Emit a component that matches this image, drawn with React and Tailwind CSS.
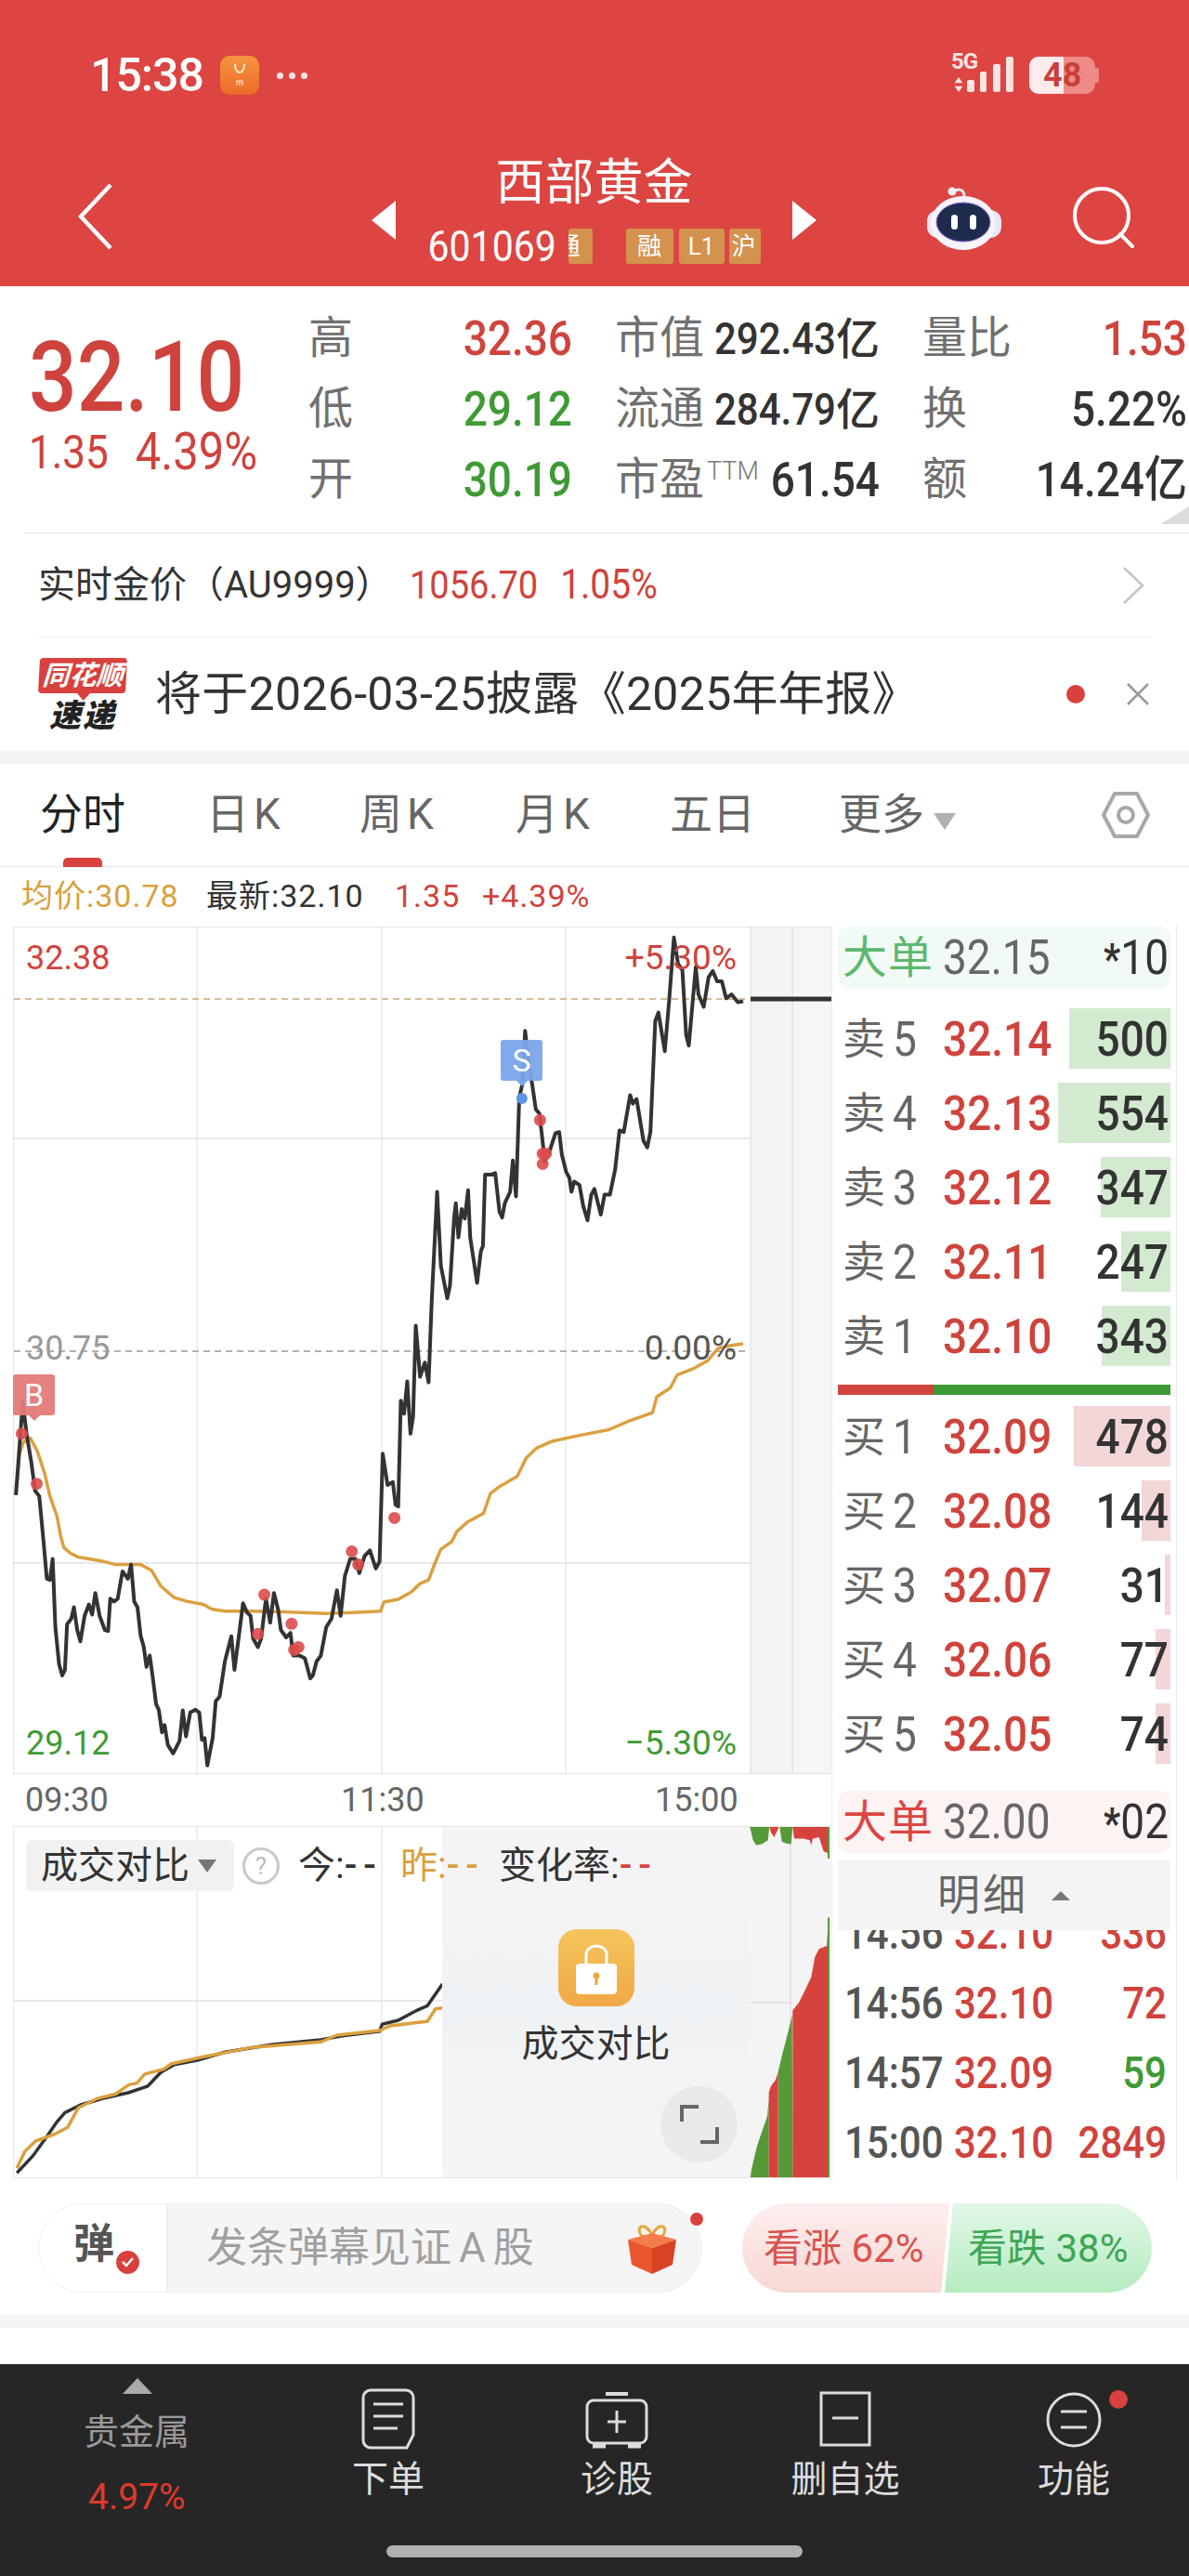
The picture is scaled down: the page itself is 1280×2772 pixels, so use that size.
const RED = "text-[#cf433d]";
const GREEN = "text-[#3f9a35]";
const tall = "inline-block scale-y-[1.14]";

// traced from the chart, in 1.742 / 1.633 zoom coordinates
const pricePts = "28,1058 35,970 41,895 48,950 57,1000 64,1050 72,1060 80,1140 86,1205 92,1207 97,1170 102,1290 109,1355 115,1375 120,1365 124,1285 132,1275 137,1255 143,1295 149,1315 157,1270 165,1250 171,1268 177,1230 185,1270 195,1295 201,1297 205,1240 212,1245 219,1240 228,1192 238,1205 244,1180 250,1245 256,1255 262,1305 268,1325 273,1360 279,1340 285,1380 291,1425 296,1435 302,1475 307,1462 313,1497 323,1512 335,1490 341,1436 347,1482 355,1440 365,1435 372,1440 377,1488 382,1485 387,1533 397,1485 403,1420 410,1412 420,1350 432,1306 438,1365 447,1300 454,1248 462,1265 468,1270 473,1310 482,1325 488,1310 497,1240 505,1282 512,1230 520,1260 525,1295 535,1308 543,1300 548,1340 560,1340 570,1345 580,1380 585,1375 592,1350 600,1340 610,1290 620,1275 630,1225 637,1270 645,1200 655,1170 665,1170 672,1195 682,1165 692,1155 703,1187 710,1175 716,985 725,1040 735,1035 740,1075 745,1078 750,892 756,915 762,858 768,950 773,920 778,760 786,850 795,825 802,860 808,715 818,525 825,655 837,712 842,690 850,570 853,545 858,605 864,555 870,572 876,522 880,605 893,685 900,630 904,620 908,495 918,495 927,492 935,560 940,570 945,545 955,525 960,470 966,533 972,360 978,335 983,242 990,300 997,340 1003,380 1010,388 1015,430 1020,472 1030,450 1040,422 1047,420 1052,460 1060,490 1066,500 1070,525 1075,507 1085,513 1092,550 1100,575 1107,530 1113,520 1125,565 1132,530 1142,530 1152,485 1160,417 1168,420 1180,355 1185,370 1192,362 1205,435 1212,447 1218,420 1227,225 1233,210 1245,278 1253,190 1262,78 1270,125 1278,135 1285,250 1290,268 1303,130 1308,178 1318,200 1327,148 1335,137 1343,155 1352,155 1360,185 1370,178 1382,192 1392,190";
const avgPts = "28,1058 35,985 42,965 55,958 68,980 82,1020 92,1060 105,1095 112,1130 118,1150 130,1160 145,1167 165,1170 190,1174 215,1180 262,1180 282,1190 300,1218 325,1238 350,1245 380,1250 395,1258 420,1262 470,1262 530,1263 610,1266 670,1264 712,1262 718,1246 745,1241 770,1228 785,1214 802,1207 815,1175 825,1153 845,1140 855,1122 875,1105 905,1090 918,1055 935,1043 968,1025 985,993 1005,975 1035,963 1085,953 1140,943 1180,927 1222,913 1230,885 1255,870 1268,847 1300,835 1325,822 1345,800 1370,795 1392,792";
const tradeDots = [[39, 950], [67, 1038], [482, 1302], [494, 1233], [545, 1284], [550, 1330], [558, 1325], [658, 1157], [670, 1180], [738, 1098], [1011, 399], [1016, 458], [1022, 458], [1016, 476]];

const volToday = "30,1165 60,1110 85,1050 105,1000 120,970 150,945 190,925 240,905 275,885 300,840 325,815 370,800 420,775 510,750 600,735 640,722 710,708 715,685 745,672 780,640 800,625 828,555";
const volYesterday = "30,1150 45,1095 65,1062 100,1040 125,1018 145,955 180,925 215,910 240,880 255,875 270,845 305,830 320,812 380,790 470,760 600,742 630,720 710,705 730,690 800,675 815,635 828,632";

const mapPts = (pts, fx, fy, ox, oy) =>
  pts
    .split(" ")
    .map((p) => {
      const [x, y] = p.split(",").map(Number);
      return `${(x / fx - ox).toFixed(1)},${(y / fy + oy).toFixed(1)}`;
    })
    .join(" ");

const sellRows = [
  { n: 5, price: "32.14", vol: "500", w: 109 },
  { n: 4, price: "32.13", vol: "554", w: 121 },
  { n: 3, price: "32.12", vol: "347", w: 75 },
  { n: 2, price: "32.11", vol: "247", w: 53 },
  { n: 1, price: "32.10", vol: "343", w: 74 },
];
const buyRows = [
  { n: 1, price: "32.09", vol: "478", w: 104 },
  { n: 2, price: "32.08", vol: "144", w: 31 },
  { n: 3, price: "32.07", vol: "31", w: 6 },
  { n: 4, price: "32.06", vol: "77", w: 16 },
  { n: 5, price: "32.05", vol: "74", w: 16 },
];
const ticks = [
  { t: "14:56", p: "32.10", v: "336", c: RED },
  { t: "14:56", p: "32.10", v: "72", c: RED },
  { t: "14:57", p: "32.09", v: "59", c: GREEN },
  { t: "15:00", p: "32.10", v: "2849", c: RED },
];

function StatusBar() {
  return (
    <div className="flex items-center h-[44px] mt-[59px] pl-[97px] text-white">
      <span className="text-[50px] font-medium tracking-[-1px] w-[140px] leading-none">15:38</span>
      <div className="w-[42px] h-[42px] rounded-[10px] bg-gradient-to-b from-[#f4953f] to-[#ec6a2a] flex items-center justify-center">
        <svg width="26" height="30" viewBox="0 0 26 30" fill="none" stroke="#fde6cc">
          <path d="M8 3c0 6 2.500 9 5 9s5-3 5-9" strokeWidth="2" />
          <path d="M10 26v-5h6v5M13 21v5" strokeWidth="1.200" />
        </svg>
      </div>
      <div className="flex gap-[6px] ml-[19px]">
        <span className="w-[7px] h-[7px] rounded-full bg-[#fbe3e2]" />
        <span className="w-[7px] h-[7px] rounded-full bg-[#fbe3e2]" />
        <span className="w-[7px] h-[7px] rounded-full bg-[#fbe3e2]" />
      </div>
      <div className="ml-[693px] flex items-start h-[44px]">
        <div className="w-[17px] flex flex-col items-start">
          <span className="text-[24px] font-bold leading-[20px] text-[#fbe3e2] tracking-[-1px] mt-[-3px]">5G</span>
          <svg width="12" height="16" viewBox="0 0 12 18" className="mt-[7px] ml-[2px]" fill="#fbe3e2">
            <path d="M6 0l5 7H1zM6 18l5-7H1z" />
          </svg>
        </div>
        <svg width="52" height="40" viewBox="0 0 52 40" className="mt-[2px] mr-[15px]" fill="#fbe3e2">
          <rect x="0" y="25" width="8" height="13" rx="2" />
          <rect x="14" y="16" width="7" height="22" rx="2" />
          <rect x="28" y="8" width="8" height="30" rx="2" />
          <rect x="42" y="0" width="8" height="38" rx="2" />
        </svg>
        <div className="relative w-[71px] h-[40px] rounded-[10px] bg-[#ee8a87] overflow-hidden mt-[2px]">
          <div className="absolute left-0 top-0 bottom-0 w-[37px] bg-[#fdeceb]" />
          <span className="absolute left-[15px] top-0 text-[36px] leading-[40px] font-bold text-[#c8403c]">48</span>
        </div>
        <div className="w-[4px] h-[16px] rounded-r-[2px] bg-[#ee8a87] mt-[14px]" />
      </div>
    </div>
  );
}

function Badge({ children, className }) {
  return (
    <span className={`h-[38px] bg-[#d4924f] rounded-[3px] flex items-center justify-center overflow-hidden text-white text-[26px] leading-none ${className}`}>
      {children}
    </span>
  );
}

function Robot() {
  return (
    <svg width="80" height="72" viewBox="0 0 80 72" className="shrink-0">
      <path d="M28 10c4-6 12-5 12 3" fill="none" stroke="#f0e6ee" strokeWidth="3" />
      <circle cx="27" cy="8" r="4.500" fill="#f5eef2" />
      <rect x="0" y="28" width="80" height="30" rx="12" fill="#e9e6f5" />
      <ellipse cx="39" cy="42" rx="35" ry="29" fill="#f6f3fa" />
      <ellipse cx="39" cy="41" rx="29" ry="21" fill="#1f2b4d" stroke="#8a6ee0" strokeWidth="1" />
      <rect x="26" y="33" width="7" height="16" rx="3.500" fill="#fff" />
      <rect x="46" y="33" width="7" height="16" rx="3.500" fill="#fff" />
    </svg>
  );
}

function Header() {
  return (
    <div className="h-[308px] bg-[#dc4541] shrink-0 text-white overflow-hidden">
      <StatusBar />
      <div className="flex items-center mt-[71px] pl-[84px]">
        <svg width="38" height="72" viewBox="0 0 38 72" fill="none" stroke="#fff" strokeWidth="4.500" className="mr-[278px] shrink-0 mt-[8px]">
          <path d="M35 2L3 36l32 34" />
        </svg>
        <svg width="26" height="42" viewBox="0 0 26 42" className="shrink-0 mt-[15px]" fill="#fff">
          <path d="M26 0v42L0 21z" />
        </svg>
        <div className="w-[427px] flex flex-col items-center mt-[-8px]">
          <span className="text-[53px] leading-[62px]">西部黄金</span>
          <div className="flex items-center mt-[18px] w-[358px]">
            <span className={`text-[41px] leading-[38px] w-[151px] ${tall}`}>601069</span>
            <Badge className="w-[26px]">
              <span className="ml-[-26px]">通</span>
            </Badge>
            <Badge className="w-[51px] ml-[36px]">融</Badge>
            <Badge className="w-[49px] ml-[6px]">L1</Badge>
            <Badge className="w-[34px] ml-[5px] justify-start pl-[3px]">沪</Badge>
          </div>
        </div>
        <svg width="26" height="42" viewBox="0 0 26 42" className="shrink-0 mt-[15px]" fill="#fff">
          <path d="M0 0v42l26-21z" />
        </svg>
        <div className="ml-[119px] mt-[9px]">
          <Robot />
        </div>
        <svg width="68" height="68" viewBox="0 0 68 68" fill="none" stroke="#fff" strokeWidth="4" className="ml-[75px] mt-[9px] shrink-0">
          <circle cx="33" cy="32" r="29" />
          <path d="M53 52l13 13" strokeLinecap="round" />
        </svg>
      </div>
    </div>
  );
}

function QuoteRow({ label, value, valueClass, mid, midValue, right, rightValue, rightClass }) {
  return (
    <div className="grid grid-cols-[284px_285px_285px] gap-x-[46px] h-[76px] items-center">
      <div className="flex justify-between items-center">
        <span className="text-[48px] text-[#707070] leading-none">{label}</span>
        <span className={`text-[46px] font-medium ${tall} ${valueClass}`}>{value}</span>
      </div>
      <div className="flex justify-between items-center">
        <span className="text-[48px] text-[#707070] leading-none">{mid}</span>
        {midValue}
      </div>
      <div className="flex justify-between items-center">
        <span className="text-[48px] text-[#707070] leading-none">{right}</span>
        <span className={`text-[46px] font-medium ${tall} ${rightClass}`}>{rightValue}</span>
      </div>
    </div>
  );
}

function BigValue({ num }) {
  return (
    <span className="text-[#333] font-medium flex items-center">
      <span className={`text-[42px] ${tall}`}>{num}</span>
      <span className="text-[47px] leading-none">亿</span>
    </span>
  );
}

function Quote() {
  return (
    <div className="h-[265px] shrink-0 flex relative">
      <div className="w-[332px] shrink-0 pl-[31px] pt-[48px]">
        <div className={`text-[91px] leading-[100px] font-medium inline-block scale-y-[1.16] ${RED}`}>32.10</div>
        <div className={`flex gap-[29px] text-[44px] leading-[50px] mt-[6px] ${RED}`}>
          <span className={tall}>1.35</span>
          <span className={`text-[49px] ${tall}`}>4.39%</span>
        </div>
      </div>
      <div className="pt-[18px]">
        <QuoteRow label="高" value="32.36" valueClass={RED} mid="市值" midValue={<BigValue num="292.43" />} right="量比" rightValue="1.53" rightClass={RED} />
        <QuoteRow label="低" value="29.12" valueClass={GREEN} mid="流通" midValue={<BigValue num="284.79" />} right="换" rightValue="5.22%" rightClass="text-[#333]" />
        <QuoteRow
          label="开"
          value="30.19"
          valueClass={GREEN}
          mid={
            <span className="flex items-start">
              市盈<span className="text-[27px] text-[#777] font-light leading-[24px] mt-[3px] ml-[3px]">TTM</span>
            </span>
          }
          midValue={<span className={`text-[#333] text-[46px] font-medium ${tall}`}>61.54</span>}
          right="额"
          rightValue="14.24亿"
          rightClass="text-[#333]"
        />
      </div>
      <div className="absolute right-0 bottom-[9px] w-0 h-0 border-l-[31px] border-l-transparent border-b-[19px] border-b-[#dcdcdc]" />
    </div>
  );
}

function GoldRow() {
  return (
    <div className="h-[112px] shrink-0 ml-[26px] border-t border-[#e5e5e5] flex items-center pl-[15px] pr-[48px]">
      <span className="text-[40px] text-[#333] w-[400px] shrink-0">实时金价（AU9999）</span>
      <span className={`text-[38px] ${tall} ${RED}`}>1056.70</span>
      <span className={`text-[39px] ml-[24px] ${tall} ${RED}`}>1.05%</span>
      <svg width="24" height="40" viewBox="0 0 24 40" fill="none" stroke="#c4c4c4" strokeWidth="2.500" className="ml-auto">
        <path d="M2 1l20 19L2 39" />
      </svg>
    </div>
  );
}

function Logo() {
  return (
    <div className="w-[96px] shrink-0 flex flex-col items-center">
      <div className="relative w-[94px] h-[38px] bg-[#d8413d] rounded-[4px] -skew-x-3 flex items-center justify-center">
        <span className="text-[29px] font-bold italic text-white leading-none">同花顺</span>
        <span className="absolute bottom-[-8px] left-[42px] w-0 h-0 border-x-[7px] border-x-transparent border-t-[8px] border-t-[#d8413d]" />
      </div>
      <span className="text-[34px] font-black italic text-[#222] leading-[32px] mt-[8px] tracking-[2px]">速递</span>
    </div>
  );
}

function NoticeRow() {
  return (
    <div className="h-[123px] shrink-0 ml-[41px] mr-[40px] border-t border-[#eeeeee] flex items-center">
      <Logo />
      <span className="text-[50px] tracking-[0.3px] text-[#333] ml-[30px]">将于2026-03-25披露《2025年年报》</span>
      <span className="w-[20px] h-[20px] rounded-full bg-[#d8413d] ml-auto" />
      <svg width="26" height="26" viewBox="0 0 26 26" fill="none" stroke="#999" strokeWidth="2.500" className="ml-[44px] mr-[2px]">
        <path d="M2 2l22 22M24 2L2 24" />
      </svg>
    </div>
  );
}

function Tabs() {
  return (
    <div className="h-[111px] shrink-0 border-b border-[#e8e8e8] relative flex items-center pb-[1px] text-[46px] text-[#666]">
      <span className="absolute left-[43px] text-[#222]">分时</span>
      <span className="absolute left-[68px] bottom-[-1px] w-[42px] h-[10px] rounded-t-[5px] bg-[#d8413d]" />
      <span className="absolute left-[222px] tracking-[5px]">日K</span>
      <span className="absolute left-[387px] tracking-[5px]">周K</span>
      <span className="absolute left-[555px] tracking-[5px]">月K</span>
      <span className="absolute left-[721px]">五日</span>
      <span className="absolute left-[903px]">更多</span>
      <span className="absolute left-[1005px] top-[53px] w-0 h-0 border-x-[12px] border-x-transparent border-t-[18px] border-t-[#b0b0b0]" />
      <svg width="54" height="52" viewBox="0 0 54 52" fill="none" stroke="#a8a8a8" strokeWidth="4" className="absolute left-[1185px]">
        <path d="M15 3h24l12 23-12 23H15L3 26z" strokeLinejoin="round" />
        <circle cx="27" cy="26" r="8" />
      </svg>
    </div>
  );
}

function InfoLine() {
  return (
    <div className="h-[62px] shrink-0 pl-[23px] flex items-center text-[34px] tracking-[1px]">
      <span className="text-[#d7a23f] w-[199px] shrink-0">均价:30.78</span>
      <span className="text-[#333] w-[203px] shrink-0">最新:32.10</span>
      <span className={`w-[94px] shrink-0 ${RED}`}>1.35</span>
      <span className={RED}>+4.39%</span>
    </div>
  );
}

function PriceChart() {
  const width = 792;
  const height = 912;
  const line = (pts) => mapPts(pts, 1.742, 1.633, 14, 960 - 997);
  return (
    <div className="relative h-[912px] mt-[2px] border border-[#e4e4e4] bg-white text-[36px]">
      <div className="absolute inset-y-0 left-[792px] w-[45px] bg-[#f4f4f4] border-l-[3px] border-[#ececec]" />
      <div className="absolute inset-y-0 left-[837px] w-[43px] bg-[#f6f6f6] border-l-2 border-[#e6e6e6]" />
      <svg width={width} height={height} className="absolute left-0 top-0 overflow-visible">
        {[197, 396, 594].map((x) => (
          <line key={x} x1={x} x2={x} y1="0" y2={height} stroke="#e8e8e8" strokeWidth="1.500" />
        ))}
        {[227, 684].map((y) => (
          <line key={y} x1="0" x2={width} y1={y} y2={y} stroke="#e2e2e2" strokeWidth="1.500" />
        ))}
        <line x1="0" x2={width} y1="77" y2="77" stroke="#c9a878" strokeWidth="1.500" strokeDasharray="7 5" />
        <line x1="0" x2={width} y1="456" y2="456" stroke="#999" strokeWidth="1.500" strokeDasharray="7 5" />
        <polyline points={line(avgPts)} fill="none" stroke="#dba040" strokeWidth="3.500" strokeLinejoin="round" />
        <polyline points={line(pricePts)} fill="none" stroke="#333" strokeWidth="4" strokeLinejoin="round" />
        {tradeDots.map(([x, y], i) => (
          <circle key={i} cx={x / 1.742 - 14} cy={y / 1.633 - 37} r="6.500" fill="#dc4d4b" fillOpacity="0.9" />
        ))}
        <circle cx={977 / 1.742 - 14} cy={361 / 1.633 - 37} r="6" fill="#5b95e8" />
        <line x1="793" x2="880" y1="77" y2="77" stroke="#333" strokeWidth="5" />
      </svg>

      <div className="absolute left-[-1px] top-[481px] w-[45px] h-[44px] bg-[#e47a78]/95 rounded-[3px] text-white text-[34px] leading-[44px] text-center">
        B
        <span className="absolute bottom-[-6px] left-[17px] w-0 h-0 border-x-[6px] border-x-transparent border-t-[6px] border-t-[#e47a78]" />
      </div>
      <div className="absolute left-[524px] top-[121px] w-[45px] h-[44px] bg-[#7aa5ea]/95 rounded-[3px] text-white text-[34px] leading-[44px] text-center">
        S
        <span className="absolute bottom-[-6px] left-[17px] w-0 h-0 border-x-[6px] border-x-transparent border-t-[6px] border-t-[#7aa5ea]" />
      </div>

      <span className={`absolute left-[13px] top-[12px] leading-[42px] ${RED}`}>32.38</span>
      <span className={`absolute right-[100px] top-[12px] leading-[42px] text-[37px] ${RED}`}>+5.30%</span>
      <span className="absolute left-[13px] top-[432px] leading-[42px] text-[#999]">30.75</span>
      <span className="absolute right-[100px] top-[432px] leading-[42px] text-[37px] text-[#555]">0.00%</span>
      <span className={`absolute left-[13px] bottom-[11px] leading-[42px] ${GREEN}`}>29.12</span>
      <span className={`absolute right-[100px] bottom-[11px] leading-[42px] text-[37px] ${GREEN}`}>−5.30%</span>
    </div>
  );
}

function TimeAxis() {
  return (
    <div className="h-[56px] shrink-0 relative text-[36px] text-[#666] leading-[56px]">
      <span className="absolute left-[13px]">09:30</span>
      <span className="absolute left-[353px]">11:30</span>
      <span className="absolute left-[691px]">15:00</span>
    </div>
  );
}

function VolumeChart() {
  const line = (pts) => mapPts(pts, 1.742, 3, 14, 1950 - 1966);
  const hist = (pts) => mapPts(pts, 3, 2.95, 17, 1960 - 1966);
  return (
    <div className="relative h-[379px] border border-[#e6e6e6] overflow-hidden">
      <svg width="461" height="378" className="absolute left-0 top-0">
        {[197, 396].map((x) => (
          <line key={x} x1={x} x2={x} y1="0" y2="378" stroke="#e8e8e8" strokeWidth="1.500" />
        ))}
        <line x1="0" x2="461" y1="187" y2="187" stroke="#e8e8e8" strokeWidth="2" />
        <polyline points={line(volToday)} fill="none" stroke="#333" strokeWidth="3.500" />
        <polyline points={line(volYesterday)} fill="none" stroke="#dba040" strokeWidth="3.500" />
      </svg>

      <div className="absolute left-[461px] top-0 bottom-0 w-[331px] bg-gradient-to-b from-[#f5f4f6] via-[#eff2f4] to-[#f5f5f7] flex flex-col items-center">
        <div className="w-[82px] h-[83px] mt-[110px] rounded-[20px] bg-gradient-to-b from-[#f5c55c] to-[#f0a845] flex items-center justify-center">
          <svg width="46" height="56" viewBox="0 0 46 56" className="mt-[2px]">
            <path d="M12 26V12a11 9 0 0 1 22 0v14" fill="none" stroke="#fff" strokeWidth="3" />
            <rect x="1" y="22" width="44" height="33" rx="4" fill="#fff" />
            <circle cx="23" cy="35" r="3.500" fill="#eda53f" />
            <rect x="21.500" y="35" width="3" height="10" fill="#eda53f" />
          </svg>
        </div>
        <span className="text-[40px] text-[#333] leading-[50px] mt-[16px]">成交对比</span>
        <div className="absolute left-[235px] top-[279px] w-[83px] h-[82px] rounded-full bg-[#e9e9e9] flex items-center justify-center">
          <svg width="46" height="46" viewBox="0 0 46 46" fill="none" stroke="#666" strokeWidth="4">
            <path d="M4 20V4h18M42 26v16H24" />
          </svg>
        </div>
      </div>

      <svg width="88" height="378" className="absolute left-[792px] top-0 bg-[#f4f4f4]">
        <line x1="44" x2="44" y1="0" y2="378" stroke="#dedede" strokeWidth="1.500" />
        <line x1="0" x2="44" y1="189" y2="189" stroke="#dedede" strokeWidth="1.500" />
        <g fill="#569a38">
          <polygon points={hist("52,18 62,60 72,75 90,72 110,60 115,18")} />
          <polygon points={hist("148,18 155,65 170,70 185,72 190,18")} />
          <polygon points={hist("303,18 303,118 311,118 311,18")} />
          <polygon points={hist("52,1140 58,1100 75,1030 108,935 113,880 113,1140")} />
          <polygon points={hist("143,1140 143,795 155,745 175,670 188,615 190,1140")} />
          <polygon points={hist("303,305 311,305 311,1140 303,1140")} />
        </g>
        <g fill="#d6433c">
          <polygon points={hist("115,18 120,35 130,50 140,30 145,18")} />
          <polygon points={hist("190,18 195,55 225,55 245,60 250,75 255,55 275,50 290,95 303,100 303,18")} />
          <polygon points={hist("113,1140 113,860 120,840 135,820 143,795 143,1140")} />
          <polygon points={hist("190,1140 190,600 210,575 230,535 250,495 262,430 275,405 300,395 303,350 303,1140")} />
        </g>
      </svg>

      <div className="absolute left-[13px] top-[14px] flex items-center text-[40px] leading-none">
        <div className="w-[224px] h-[55px] rounded-[6px] bg-[#f2f2f2] flex items-center pl-[16px] text-[#333]">
          成交对比
          <span className="ml-[9px] w-0 h-0 border-x-[10px] border-x-transparent border-t-[14px] border-t-[#777]" />
        </div>
        <span className="ml-[9px] w-[40px] h-[40px] rounded-full border-[3px] border-[#c9c9c9] flex items-center justify-center text-[26px] text-[#bbb]">?</span>
        <span className="ml-[20px] text-[#333] w-[110px]">
          今:<span className="tracking-[7px] font-medium">--</span>
        </span>
        <span className="text-[#dba040] w-[106px]">
          昨:<span className="tracking-[7px] font-medium">--</span>
        </span>
        <span className="text-[#333]">
          变化率:<span className="text-[#d6433c] tracking-[7px] font-medium">--</span>
        </span>
      </div>
    </div>
  );
}

function BookRow({ side, n, price, vol, w, barClass }) {
  return (
    <div className="relative flex items-center h-[65px] pl-[5px] pr-[2px] text-[46px] leading-none">
      <span className={`absolute right-0 inset-y-0 ${barClass}`} style={{ width: w }} />
      <span className="relative text-[46px] text-[#666] w-[54px]">{side}</span>
      <span className={`relative text-[#666] w-[54px] ${tall}`}>{n}</span>
      <span className={`relative font-medium ${tall} ${RED}`}>{price}</span>
      <span className={`relative font-medium ml-auto text-[#333] ${tall}`}>{vol}</span>
    </div>
  );
}

function BigOrder({ label, labelClass, bgClass, price, vol }) {
  return (
    <div className={`flex items-center h-[67px] rounded-[12px] pl-[5px] pr-[2px] text-[46px] ${bgClass}`}>
      <span className={`text-[48px] w-[108px] tracking-[1px] leading-none ${labelClass}`}>{label}</span>
      <span className={`text-[#666] ${tall}`}>{price}</span>
      <span className={`ml-auto text-[#333] ${tall}`}>
        <span className="text-[40px] font-bold">*</span>
        {vol}
      </span>
    </div>
  );
}

function OrderBook() {
  return (
    <div className="w-[372px] shrink-0 h-[1352px] border-x border-[#ececec] px-[6px] pt-[2px] flex flex-col">
      <BigOrder label="大单" labelClass="text-[#5cb870]" bgClass="bg-[#f2faf5]" price="32.15" vol="10" />
      <div className="flex flex-col gap-[15px] mt-[21px]">
        {sellRows.map((r) => (
          <BookRow key={r.n} side="卖" {...r} barClass="bg-[#d3ead1]" />
        ))}
      </div>
      <div className="flex h-[11px] mt-[20px] shrink-0">
        <span className="w-[103px] bg-[#d2453d]" />
        <span className="flex-1 bg-[#3f9a35]" />
      </div>
      <div className="flex flex-col gap-[15px] mt-[12px]">
        {buyRows.map((r) => (
          <BookRow key={r.n} side="买" {...r} barClass="bg-[#f3d6d6]" />
        ))}
      </div>
      <div className="mt-[29px]">
        <BigOrder label="大单" labelClass="text-[#dc4541]" bgClass="bg-[#fdf3f3]" price="32.00" vol="02" />
      </div>
      <div className="h-[75px] mt-[8px] shrink-0 bg-[#f4f4f4] flex items-center pl-[107px] text-[46px] text-[#666] tracking-[3px] relative z-10">
        明细
        <span className="ml-[25px] w-0 h-0 border-x-[10px] border-x-transparent border-b-[10px] border-b-[#777]" />
      </div>
      <div className="flex-1 overflow-hidden">
        <div className="mt-[-34px]">
          {ticks.map((r, i) => (
            <div key={i} className="h-[75px] flex items-center pl-[7px] pr-[4px] text-[42px] font-medium">
              <span className={`text-[#555] w-[118px] ${tall}`}>{r.t}</span>
              <span className={`${tall} ${RED}`}>{r.p}</span>
              <span className={`ml-auto ${tall} ${r.c}`}>{r.v}</span>
            </div>
          ))}
        </div>
      </div>
    </div>
  );
}

function Gift() {
  return (
    <svg width="54" height="56" viewBox="0 0 54 56" className="shrink-0">
      <path d="M27 14c-8-15-18-9-12 0 3 3 8 2 12 0zM27 14c8-15 18-9 12 0-3 3-8 2-12 0z" fill="none" stroke="#e6a63a" strokeWidth="3" />
      <path d="M1 19l26-7 26 7-26 9z" fill="#f47b4a" />
      <path d="M1 19l26 9v28L5 46z" fill="#e9572f" />
      <path d="M53 19L27 28v28l22-10z" fill="#d64425" />
    </svg>
  );
}

function DanmuBar() {
  return (
    <div className="h-[144px] shrink-0 flex pt-[24px] pl-[41px]">
      <div className="relative w-[715px] h-[96px] rounded-full border border-[#efefef] flex overflow-hidden bg-[#f5f5f5]">
        <div className="w-[139px] shrink-0 bg-white border-r-2 border-[#ededed] relative">
          <span className="absolute left-[37px] top-[18px] text-[44px] leading-[50px] font-bold text-[#555]">弹</span>
          <span className="absolute left-[83px] top-[50px] w-[25px] h-[25px] rounded-full bg-[#d8413d] flex items-center justify-center">
            <svg width="15" height="15" viewBox="0 0 15 15" fill="none" stroke="#fff" strokeWidth="2.500">
              <path d="M2 7l4 4 7-8" />
            </svg>
          </span>
        </div>
        <span className="text-[44px] text-[#a0a0a0] ml-[41px] leading-[94px]">
          发条弹幕见证<span className="mx-[8px]">A</span>股
        </span>
        <div className="ml-auto mr-[26px] self-center">
          <Gift />
        </div>
      </div>
      <span className="w-[14px] h-[14px] rounded-full bg-[#d8413d] ml-[-13px] mt-[10px] relative" />
      <div className="ml-[42px] flex h-[96px] w-[442px] relative">
        <div className="w-[223px] shrink-0 rounded-l-[48px] bg-gradient-to-b from-[#fdeeee] to-[#f8d8d4] flex items-center pl-[23px] text-[42px] text-[#d9534f] [clip-path:polygon(0_0,100%_0,96%_100%,0_100%)]">
          看涨 62%
        </div>
        <div className="w-[223px] shrink-0 ml-[-5px] rounded-r-[48px] bg-gradient-to-b from-[#e2f7e8] to-[#b4ecc0] flex items-center pl-[25px] text-[42px] text-[#3ea655] [clip-path:polygon(4%_0,100%_0,100%_100%,0_100%)]">
          看跌 38%
        </div>
      </div>
    </div>
  );
}

function NavItem({ icon, label }) {
  return (
    <div className="w-[246px] flex flex-col items-center text-[39px] text-[#dcdcdc] leading-none">
      <div className="h-[66px] flex items-end justify-center">{icon}</div>
      <span className="mt-[10px] leading-[44px]">{label}</span>
    </div>
  );
}

function BottomBar() {
  return (
    <div className="flex-1 bg-[#262626] relative">
      <div className="flex pt-[26px]">
        <div className="w-[295px] pl-[90px] shrink-0 flex flex-col items-start mt-[-11px]">
          <span className="ml-[42px] w-0 h-0 border-x-[16px] border-x-transparent border-b-[17px] border-b-[#aaaaaa]" />
          <span className="text-[38px] text-[#999] leading-[50px] mt-[16px]">贵金属</span>
          <span className="text-[39px] text-[#e0392b] leading-[46px] mt-[22px] ml-[5px]">4.97%</span>
        </div>
        <div className="flex">
          <NavItem
            label="下单"
            icon={
              <svg width="58" height="66" viewBox="0 0 58 66" fill="none" stroke="#dcdcdc" strokeWidth="3">
                <path d="M10 2h38a8 8 0 0 1 8 8v40l-7 14H10a8 8 0 0 1-8-8V10a8 8 0 0 1 8-8z" />
                <path d="M13 17h32M13 30h32M13 43h26" />
              </svg>
            }
          />
          <NavItem
            label="诊股"
            icon={
              <svg width="68" height="62" viewBox="0 0 68 62" fill="none" stroke="#dcdcdc" strokeWidth="3">
                <path d="M22 2h24" strokeWidth="4" />
                <rect x="2" y="9" width="64" height="46" rx="7" />
                <path d="M34 20v24M24 32h20" />
                <path d="M8 58h14M46 58h14" strokeWidth="5" />
              </svg>
            }
          />
          <NavItem
            label="删自选"
            icon={
              <svg width="56" height="60" viewBox="0 0 56 60" fill="none" stroke="#dcdcdc" strokeWidth="3" className="mb-[3px]">
                <rect x="2" y="2" width="52" height="56" />
                <path d="M14 29h28" />
              </svg>
            }
          />
          <NavItem
            label="功能"
            icon={
              <svg width="60" height="60" viewBox="0 0 60 60" fill="none" stroke="#dcdcdc" strokeWidth="3" className="mb-[2px]">
                <circle cx="30" cy="30" r="28" />
                <path d="M16 21h28M16 38h28" />
              </svg>
            }
          />
        </div>
      </div>
      <span className="absolute left-[1194px] top-[28px] w-[20px] h-[20px] rounded-full bg-[#d8413d]" />
      <span className="absolute left-[416px] bottom-[20px] w-[448px] h-[13px] rounded-full bg-[#b0b0b0]" />
    </div>
  );
}

export default function App() {
  return (
    <div className="w-[1280px] h-[2772px] overflow-hidden bg-white flex flex-col font-[Roboto,'Noto_Sans_CJK_SC',sans-serif]">
      <Header />
      <Quote />
      <GoldRow />
      <NoticeRow />
      <div className="h-[14px] shrink-0 bg-[#f4f4f4]" />
      <Tabs />
      <InfoLine />
      <div className="flex shrink-0">
        <div className="w-[895px] shrink-0 pl-[14px] pr-[1px]">
          <PriceChart />
          <TimeAxis />
          <VolumeChart />
        </div>
        <OrderBook />
      </div>
      <DanmuBar />
      <div className="h-[14px] shrink-0 bg-[#f4f4f4]" />
      <div className="h-[39px] shrink-0" />
      <BottomBar />
    </div>
  );
}
